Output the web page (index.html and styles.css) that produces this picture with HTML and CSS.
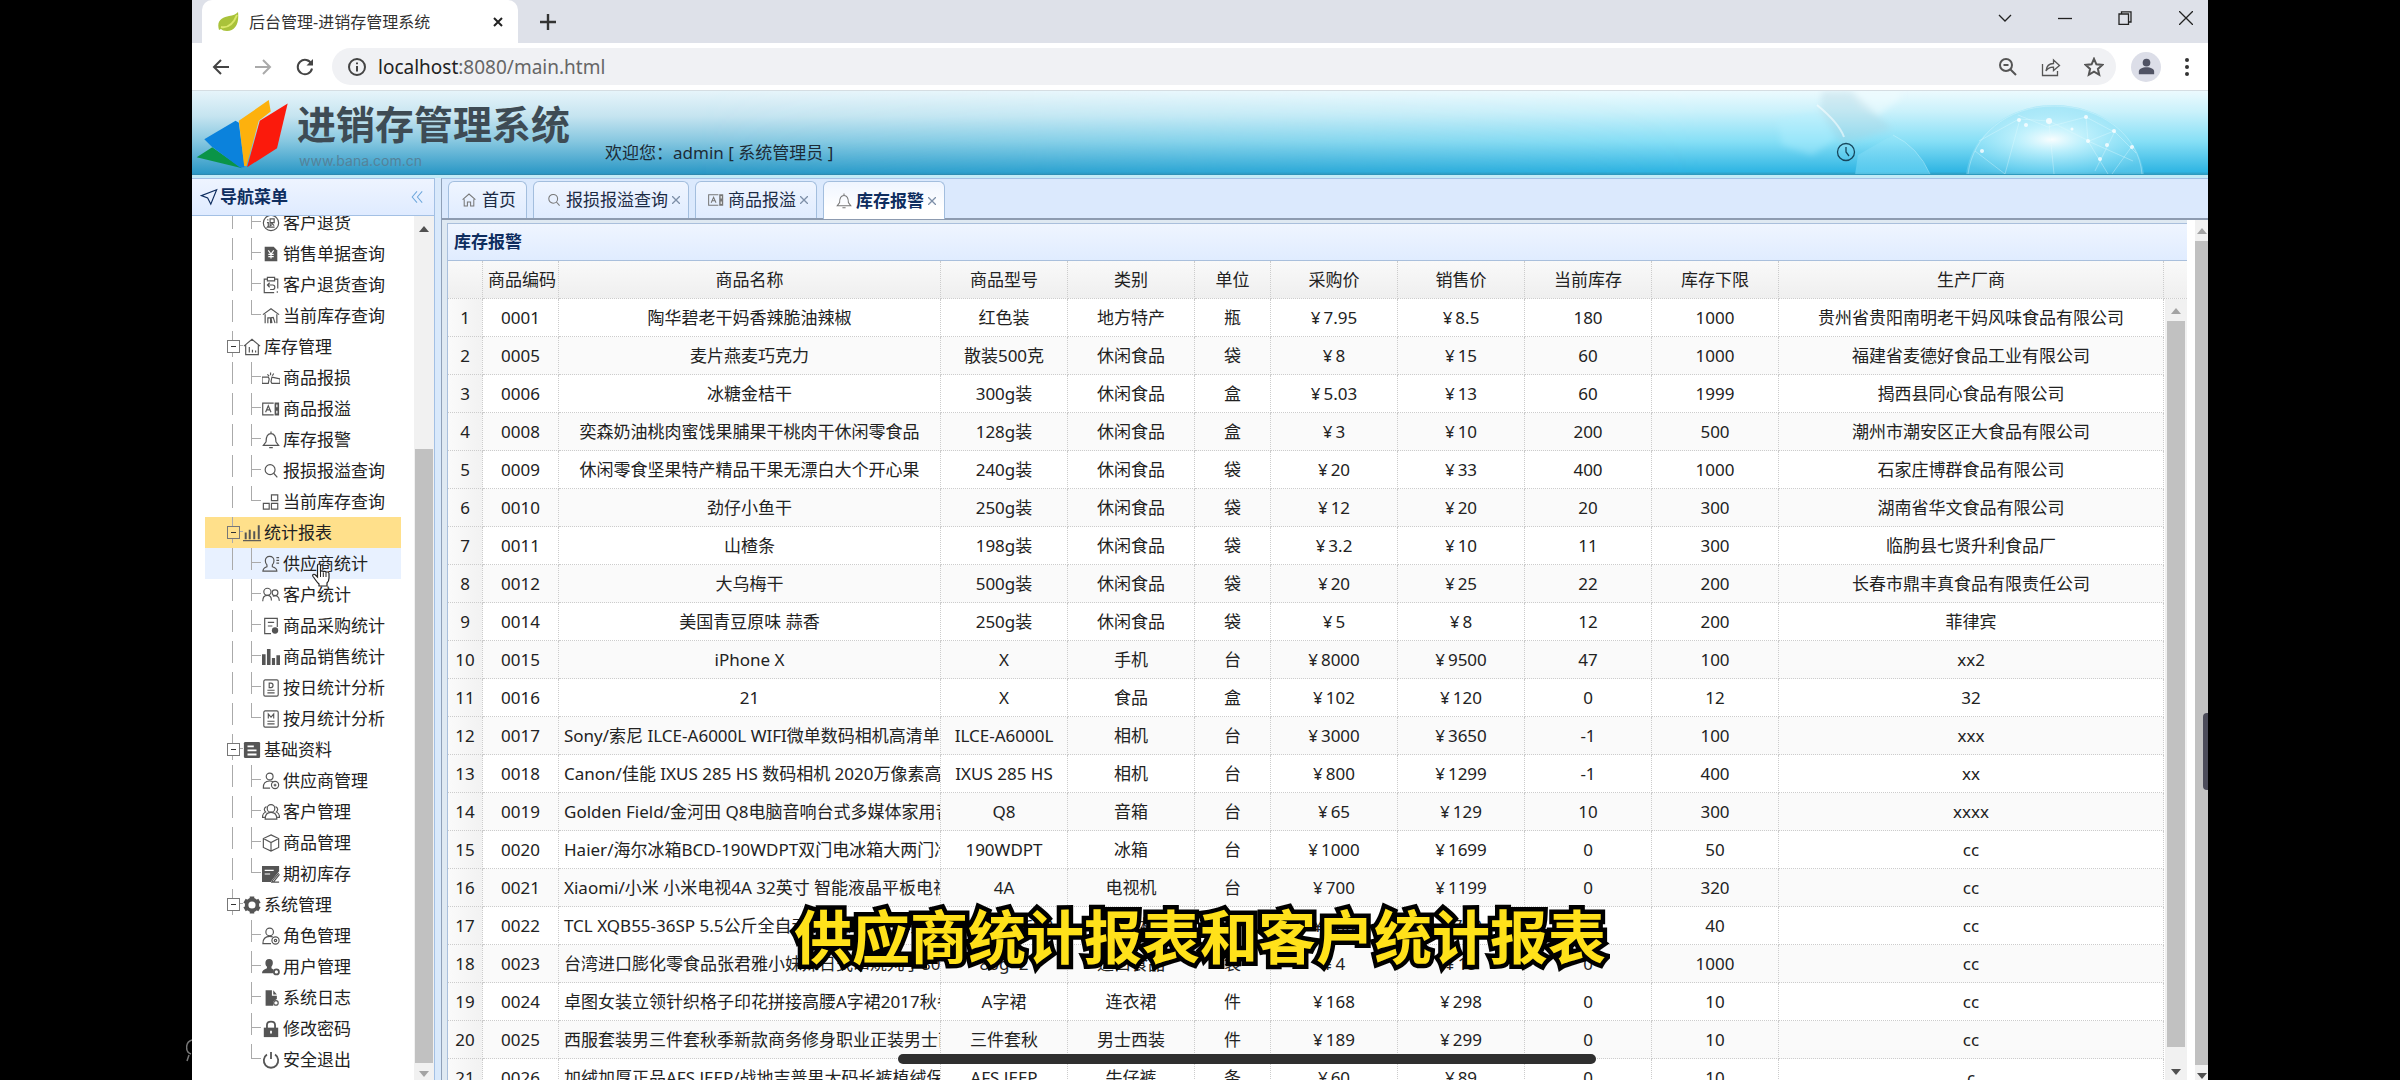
FILE: index.html
```html
<!DOCTYPE html>
<html lang="zh-CN">
<head>
<meta charset="utf-8">
<title>后台管理-进销存管理系统</title>
<link rel="stylesheet" href="styles.css">
</head>
<body>
<svg class="sprite" aria-hidden="true">
  <symbol id="i-back" viewBox="0 0 20 20"><path d="M18 10H3M10 3l-7 7 7 7"/></symbol>
  <symbol id="i-fwd" viewBox="0 0 20 20"><path d="M2 10h15M10 3l7 7-7 7"/></symbol>
  <symbol id="i-reload" viewBox="0 0 20 20"><path d="M16.500 7A7.200 7.200 0 1 0 17 11.500"/><path d="M18 2v6.500h-6.500z" fill="currentColor" stroke="none"/></symbol>
  <symbol id="i-info" viewBox="0 0 20 20"><circle cx="10" cy="10" r="8"/><path d="M10 9v5.500M10 5.500v1.800"/></symbol>
  <symbol id="i-zoomout" viewBox="0 0 20 20"><circle cx="8" cy="8" r="6"/><path d="M12.500 12.500 18 18M5.500 8h5"/></symbol>
  <symbol id="i-share" viewBox="0 0 20 20"><path d="M1.500 7v11.500h15V14"/><path d="M5 14c.5-5 3-7.500 7.500-7.500V3l6 5.500-6 5v-3.300C9 10 7 11 5 14z"/></symbol>
  <symbol id="i-star" viewBox="0 0 20 20"><path d="m10 1.800 2.400 5.500 6 .6-4.500 4 1.300 5.900L10 14.700l-5.200 3.100 1.300-5.900-4.500-4 6-.6z"/></symbol>
  <symbol id="i-clock" viewBox="0 0 20 20"><circle cx="10" cy="10" r="8.500"/><path d="M10 5v5l3 4"/></symbol>
  <symbol id="i-plane" viewBox="0 0 20 20"><path d="M18.500 2 1.500 8.500l7 2.500 3.500 7z"/></symbol>
  <symbol id="i-collapse" viewBox="0 0 20 20"><path d="M10 3 4 10l6 7M16.500 3l-6 7 6 7"/></symbol>
  <symbol id="i-return" viewBox="0 0 20 20"><circle cx="10" cy="10" r="8.500"/><path d="M6 6l1 1M5.500 9.500H7v4l-1 1h8M9 5.500h4.500v4H9zM9 5.500V13l2-1M10.500 10l3 3"/></symbol>
  <symbol id="i-bill" viewBox="0 0 20 20"><path class="f" d="M3 2h10l4 4v12H3z"/><path class="w" d="M7 6l3 4 3-4M10 10v5M7 10.500h6M7 13h6"/></symbol>
  <symbol id="i-clip" viewBox="0 0 20 20"><path d="M6 3.500H2.500v15h11M17.500 14V3.500H14M6 1.500h8v4H6zM17 17v1.500"/><path d="M6 10h6c3 0 3 5 0 5H9M8.500 7.500 6 10l2.500 2.500"/></symbol>
  <symbol id="i-store" viewBox="0 0 20 20"><path d="M1 8.500 10 2l9 6.500M3.500 8v10M16.500 8v10M6.500 18v-6h3v6M11 18l-1-6 2.500-.5L14.500 18"/></symbol>
  <symbol id="i-house" viewBox="0 0 20 20"><path d="M1 9 10 1.500 19 9M3 8v10.500h14V8M7 16v-6M10.500 16v-3M14 16v-2"/></symbol>
  <symbol id="i-broken" viewBox="0 0 20 20"><path d="M0 9h7l1 2-1 5H0zM11 9l9 2v5h-9l-1-2zM6 6l2 2M9.500 4v3M13 5l-1.500 2.500"/></symbol>
  <symbol id="i-abox" viewBox="0 0 20 20"><path d="M13 16.500H.8v-13H13M4 13.500l3-7 3 7M5 11h4"/><path class="f" d="M14 2.800h5v14.400h-5z"/><path class="w" d="M16.500 5v3M16.500 12v3"/></symbol>
  <symbol id="i-bell" viewBox="0 0 20 20"><path d="M10 .5v2M1.500 16l3-4c0-6 2-9 5.500-9s5.500 3 5.500 9l3 4zM8 18.500h4"/></symbol>
  <symbol id="i-search" viewBox="0 0 20 20"><circle cx="9" cy="8.500" r="5.500"/><path d="m13 12.500 4 4.500"/></symbol>
  <symbol id="i-blocks" viewBox="0 0 20 20"><path d="M10.500 2h7v6.500h-7zM10.500 11.500h7V18h-7zM1.500 11.500H8V18H1.500z"/></symbol>
  <symbol id="i-bars" viewBox="0 0 20 20"><path d="M0 18.500h20"/><path d="M3 17V9.500M7.500 17V6.500M12.500 17V8M17.500 17V1.500" stroke-width="2.200"/></symbol>
  <symbol id="i-person" viewBox="0 0 20 20"><path d="M8.500 1.500c3 0 4.800 2 4.800 4.800 0 2.300-.8 3.700-1.800 4.700v2c3 .8 5 2 5 5H1c0-3 2-4.200 4.500-5v-2c-1-1-1.800-2.400-1.800-4.700 0-2.800 1.800-4.800 4.800-4.800zM16 3h3M16 6h3M16 9h3"/></symbol>
  <symbol id="i-people" viewBox="0 0 20 20"><circle cx="6" cy="6.500" r="4"/><path d="M.8 17c0-4 2-6.500 5.200-6.500S10.500 13 10.500 16"/><circle cx="14.500" cy="7.500" r="3.200"/><path d="M12 11.500c4-2 7 0 7.300 5"/></symbol>
  <symbol id="i-report" viewBox="0 0 20 20"><path d="M10 18.500H3v-17h14V11M6.500 6h7M6.500 10h5"/><circle class="f" cx="14.500" cy="15" r="3.500"/></symbol>
  <symbol id="i-chart" viewBox="0 0 20 20"><path class="f" d="M0 7h4v12H0zM5.500 1h4v18h-4zM11 11h3.500v8H11zM16 8h4v11h-4z"/></symbol>
  <symbol id="i-day" viewBox="0 0 20 20"><rect x="2" y="1" width="16" height="18" rx="1.500"/><path d="M8 4.500h2c3 0 3 5 0 5H8zM6 12.500h8M6 15.500h8"/></symbol>
  <symbol id="i-month" viewBox="0 0 20 20"><rect x="2" y="1" width="16" height="18" rx="1.500"/><path d="M7 9.500v-5l3 3.500 3-3.500v5M6 12.500h8M6 15.500h8"/></symbol>
  <symbol id="i-data" viewBox="0 0 20 20"><rect class="f" x="1" y="1" width="18" height="18" rx="1.500"/><path class="w" d="M5 6h7M5 10.500h10M5 15h10" stroke-width="2"/></symbol>
  <symbol id="i-supplier" viewBox="0 0 20 20"><circle cx="8.500" cy="5" r="3.800"/><path d="M9 18H1.500c-.5-5 2-8 7-8 1.800 0 3 .3 4 1"/><circle cx="14.500" cy="14.500" r="4"/><path d="M13 14.500h3M14.500 13v3"/></symbol>
  <symbol id="i-group" viewBox="0 0 20 20"><circle cx="10" cy="6" r="4.200"/><path d="M3.500 18c0-5 2.500-7.500 6.500-7.500s6.500 2.500 6.500 7.500zM5 4C2 5 2 8.500 4 10c-2.500 1-3.500 3-3.500 6H3M15 4c3 1 3 4.500 1 6 2.500 1 3.500 3 3.500 6H17"/></symbol>
  <symbol id="i-cube" viewBox="0 0 20 20"><path d="m10 1 8.500 4v10L10 19l-8.500-4V5zM1.500 5l8.500 4.500L18.500 5M10 9.500V19"/></symbol>
  <symbol id="i-edit" viewBox="0 0 20 20"><path class="f" d="M0 1h19v6l-8 10-1 2H0z"/><path class="w" d="M3 6h10M3 10h6"/><path d="m18.500 9-7 8.500-.5 1.500 2-.5 6.500-8M11 19h8"/></symbol>
  <symbol id="i-gear" viewBox="0 0 20 20"><path d="M10 .5v4M10 15.500v4M1.700 5.200l3.500 2M14.800 12.800l3.500 2M1.700 14.800l3.500-2M14.800 7.200l3.500-2" stroke-width="5"/><circle cx="10" cy="10" r="6" stroke-width="4"/></symbol>
  <symbol id="i-role" viewBox="0 0 20 20"><circle cx="8.500" cy="5.500" r="4.200"/><path d="M10 18.500H1c0-5 2.500-8 7.500-8 1.500 0 2.500.2 3.500.7"/><circle cx="15" cy="15" r="4"/><circle cx="15" cy="15" r="1.300"/></symbol>
  <symbol id="i-user" viewBox="0 0 20 20"><path class="f" d="M8 1c3 0 4.500 2 4 5-.3 2-1 3-1.500 3.500v2L13 13l-1 4H0c0-3 2-4 5.500-5.500v-2C4.500 9 4 8 3.800 6 3.500 3 5 1 8 1z"/><circle cx="16" cy="15.500" r="2.800" stroke-width="2"/></symbol>
  <symbol id="i-log" viewBox="0 0 20 20"><path class="f" d="M4 1.500h7v6h5.500V11l-4 3v4.500H4zM12.500 1.500l4 4.500h-4z"/><circle cx="15.500" cy="15.500" r="2.500"/></symbol>
  <symbol id="i-lock" viewBox="0 0 20 20"><path d="M5.500 9V5.500c0-5 9-5 9 0V9" stroke-width="2"/><path class="f" d="M2 8.500h16V19H2z"/><path class="w" d="M10 12v3" stroke-width="2"/></symbol>
  <symbol id="i-power" viewBox="0 0 20 20"><path d="M5.500 4a8 8 0 1 0 9 0M10 1v8" stroke-width="2"/></symbol>
  <symbol id="i-home" viewBox="0 0 20 20"><path d="M2 9.500 10 2.500l8 7M4 9v8.500h4v-5h4v5h4V9"/></symbol>
</svg>

<div class="browser">
  <header class="titlebar">
    <div class="page-tab">
      <svg class="leaf" viewBox="0 0 22 22"><path d="M2 19C-1 9 6 6 12 5c4-.6 7-1.500 9-4 1.500 12-3 19-11 19-3 0-5-1-6-2z" fill="#a9c23a"/><path d="M4 16c6 1 12-2 16-12" fill="none" stroke="#dbe86b" stroke-width="2"/></svg>
      <span class="page-title">后台管理-进销存管理系统</span>
      <button class="plain" aria-label="关闭标签页"><svg class="ic s10" viewBox="0 0 20 20"><path d="m2 2 16 16M18 2 2 18" stroke-width="4"/></svg></button>
    </div>
    <button class="plain new-tab" aria-label="新建标签页"><svg class="ic s16" viewBox="0 0 20 20"><path d="M10 0v20M0 10h20" stroke-width="3"/></svg></button>
    <div class="win-buttons">
      <button class="plain" aria-label="搜索标签页"><svg class="ic s14" viewBox="0 0 14 14"><path d="m1 4 6 6 6-6"/></svg></button>
      <button class="plain" aria-label="最小化"><svg class="ic s14" viewBox="0 0 14 14"><path d="M0 7.500h14"/></svg></button>
      <button class="plain" aria-label="还原"><svg class="ic s14" viewBox="0 0 14 14"><path d="M1 3h9.500v10.500H1zM3.500 3V.8H13V11h-2.500"/></svg></button>
      <button class="plain" aria-label="关闭"><svg class="ic s14" viewBox="0 0 14 14"><path d="m0 0 14 14M14 0 0 14"/></svg></button>
    </div>
  </header>

  <div class="toolbar">
    <div class="nav-buttons">
      <button class="plain" aria-label="后退"><svg class="ic s20 bold"><use href="#i-back"/></svg></button>
      <button class="plain dim" aria-label="前进"><svg class="ic s20 bold"><use href="#i-fwd"/></svg></button>
      <button class="plain" aria-label="刷新"><svg class="ic s20 bold"><use href="#i-reload"/></svg></button>
    </div>
    <div class="address">
      <svg class="ic s20 bold"><use href="#i-info"/></svg>
      <label for="url">localhost</label><input id="url" type="text" value=":8080/main.html">
      <div class="address-tools">
        <button class="plain" aria-label="缩放"><svg class="ic s20 bold"><use href="#i-zoomout"/></svg></button>
        <button class="plain" aria-label="分享"><svg class="ic s20"><use href="#i-share"/></svg></button>
        <button class="plain" aria-label="收藏"><svg class="ic s20 bold"><use href="#i-star"/></svg></button>
      </div>
    </div>
    <button class="avatar" aria-label="用户"><svg viewBox="0 0 20 20"><circle cx="10" cy="5.500" r="4.500"/><path d="M1 19v-3c0-3 4-5 9-5s9 2 9 5v3z"/></svg></button>
    <button class="plain menu" aria-label="菜单"><svg viewBox="0 0 4 20"><circle cx="2" cy="3" r="2"/><circle cx="2" cy="10" r="2"/><circle cx="2" cy="17" r="2"/></svg></button>
  </div>

  <div class="banner">
    <svg class="scenery" viewBox="0 0 508 83" aria-hidden="true">
      <defs>
        <radialGradient id="glow" cx="48%" cy="50%" r="60%"><stop offset="0" stop-color="#fff" stop-opacity=".95"/><stop offset=".3" stop-color="#cdf5fe" stop-opacity=".8"/><stop offset=".75" stop-color="#8fe0f6" stop-opacity=".6"/><stop offset="1" stop-color="#7fd6f0" stop-opacity=".4"/></radialGradient>
        <linearGradient id="haze" x1="0" y1="0" x2="0" y2="1"><stop offset="0" stop-color="#b5eefd" stop-opacity=".1"/><stop offset="1" stop-color="#7fe0fb" stop-opacity=".5"/></linearGradient>
        <filter id="soft" x="-20%" y="-20%" width="140%" height="140%"><feGaussianBlur stdDeviation="3"/></filter>
      </defs>
      <g filter="url(#soft)">
        <path d="M78 28l40-8 18 28-24 16-30-10z" fill="#b5f1ff" opacity=".4"/>
        <path d="M150 0h50v8l-22 16-18-8z" fill="#f4fdff" opacity=".5"/>
        <path d="M120 20l22 34 50-16-40-38h-30z" fill="#a9cdda" opacity=".3"/>
      </g>
      <path d="M158 64l35-20q25 12 37 40h-75z" fill="url(#haze)"/>
      <path d="M117 14q22 18 27 32" fill="none" stroke="#fff" stroke-width="2" opacity=".55"/>
      <path d="M193 44q25 12 37 39" fill="none" stroke="#d5f7ff" opacity=".4"/>
      <path d="M266 83c5-38 40-69 88-69s85 31 90 69z" fill="url(#glow)"/>
      <g fill="none" stroke="#e9fcff" stroke-width="1" opacity=".35">
        <path d="M268 83c5-38 38-68 86-68s85 30 88 68M279 50l40-22 30 2 40 20 25-10 22 22M318 24l30 12 38-10 30 16M275 60l30 23M320 28l-15 55M349 32l5 51M388 50l20 33M415 40l-20 40M386 26l2 24 45 20M412 83l20-28"/>
      </g>
      <g fill="#fff" opacity=".8"><circle cx="319" cy="29" r="2"/><circle cx="349" cy="30" r="3"/><circle cx="326" cy="34" r="2"/><circle cx="388" cy="50" r="2"/><circle cx="414" cy="40" r="2"/><circle cx="386" cy="26" r="2"/><circle cx="282" cy="60" r="2"/><circle cx="432" cy="56" r="2"/><circle cx="400" cy="68" r="2"/><circle cx="372" cy="38" r="1.500"/><circle cx="407" cy="54" r="2"/></g>
    </svg>
    <svg class="logo" viewBox="18 54 280 216" aria-hidden="true">
      <path d="M20 232 67 202l90 63z" fill="#0a9447"/>
      <path d="m43 178 94-56 10 6 17 134-14 1-85-63z" fill="#0b82dc"/>
      <path d="m147 122 90-62 6 34-36 28-37 136h-7z" fill="#fdb10d"/>
      <path d="m210 122 84-52-32 135-90 57z" fill="#fb1a0c"/>
    </svg>
    <div class="brand">
      <h1>进销存管理系统</h1>
      <span>www.bana.com.cn</span>
    </div>
    <p class="welcome">欢迎您：admin [ 系统管理员 ]</p>
    <svg class="ic s20 clock"><use href="#i-clock"/></svg>
  </div>

  <div class="workspace">
    <aside class="sidebar">
      <div class="side-head">
        <svg class="ic s18"><use href="#i-plane"/></svg><h2>导航菜单</h2>
        <button class="plain" aria-label="折叠"><svg class="ic s16"><use href="#i-collapse"/></svg></button>
      </div>
      <div class="side-body">
        <ul class="tree">
          <li class="leaf-row"><svg class="ic s18"><use href="#i-return"/></svg><a href="#">客户退货</a></li>
          <li class="leaf-row"><svg class="ic s18"><use href="#i-bill"/></svg><a href="#">销售单据查询</a></li>
          <li class="leaf-row"><svg class="ic s18"><use href="#i-clip"/></svg><a href="#">客户退货查询</a></li>
          <li class="leaf-row end"><svg class="ic s18"><use href="#i-store"/></svg><a href="#">当前库存查询</a></li>
          <li class="group-row"><svg class="ic s18"><use href="#i-house"/></svg><a href="#">库存管理</a></li>
          <li class="leaf-row"><svg class="ic s18"><use href="#i-broken"/></svg><a href="#">商品报损</a></li>
          <li class="leaf-row"><svg class="ic s18"><use href="#i-abox"/></svg><a href="#">商品报溢</a></li>
          <li class="leaf-row"><svg class="ic s18"><use href="#i-bell"/></svg><a href="#">库存报警</a></li>
          <li class="leaf-row"><svg class="ic s18"><use href="#i-search"/></svg><a href="#">报损报溢查询</a></li>
          <li class="leaf-row end"><svg class="ic s18"><use href="#i-blocks"/></svg><a href="#">当前库存查询</a></li>
          <li class="group-row selected"><svg class="ic s18"><use href="#i-bars"/></svg><a href="#">统计报表</a></li>
          <li class="leaf-row hover"><svg class="ic s18"><use href="#i-person"/></svg><a href="#">供应商统计</a>
            <svg class="pointer" viewBox="0 0 20 24" aria-hidden="true"><path d="M6.500 14V2.500c0-2 3-2 3 0V9c0-1.500 2.800-1.500 2.800.3 0-1.300 2.700-1.200 2.700.5 0-1.300 3-1 3 .7V15c0 2-1 4-2 5v3H8v-2c-2-1.500-4-5-6-7.500-1.200-2 1-3 2.500-1.500z" fill="#fff" stroke="#222" stroke-width="1.200"/><path d="M9.500 9v5M12.300 9.500V14M15 10v4" stroke="#222" fill="none"/></svg></li>
          <li class="leaf-row"><svg class="ic s18"><use href="#i-people"/></svg><a href="#">客户统计</a></li>
          <li class="leaf-row"><svg class="ic s18"><use href="#i-report"/></svg><a href="#">商品采购统计</a></li>
          <li class="leaf-row"><svg class="ic s18"><use href="#i-chart"/></svg><a href="#">商品销售统计</a></li>
          <li class="leaf-row"><svg class="ic s18"><use href="#i-day"/></svg><a href="#">按日统计分析</a></li>
          <li class="leaf-row end"><svg class="ic s18"><use href="#i-month"/></svg><a href="#">按月统计分析</a></li>
          <li class="group-row"><svg class="ic s18"><use href="#i-data"/></svg><a href="#">基础资料</a></li>
          <li class="leaf-row"><svg class="ic s18"><use href="#i-supplier"/></svg><a href="#">供应商管理</a></li>
          <li class="leaf-row"><svg class="ic s18"><use href="#i-group"/></svg><a href="#">客户管理</a></li>
          <li class="leaf-row"><svg class="ic s18"><use href="#i-cube"/></svg><a href="#">商品管理</a></li>
          <li class="leaf-row end"><svg class="ic s18"><use href="#i-edit"/></svg><a href="#">期初库存</a></li>
          <li class="group-row last"><svg class="ic s18"><use href="#i-gear"/></svg><a href="#">系统管理</a></li>
          <li class="leaf-row tail"><svg class="ic s18"><use href="#i-role"/></svg><a href="#">角色管理</a></li>
          <li class="leaf-row tail"><svg class="ic s18"><use href="#i-user"/></svg><a href="#">用户管理</a></li>
          <li class="leaf-row tail"><svg class="ic s18"><use href="#i-log"/></svg><a href="#">系统日志</a></li>
          <li class="leaf-row tail"><svg class="ic s18"><use href="#i-lock"/></svg><a href="#">修改密码</a></li>
          <li class="leaf-row tail end"><svg class="ic s18"><use href="#i-power"/></svg><a href="#">安全退出</a></li>
        </ul>
        <div class="scroll side-scroll"><i class="up dark"></i><b></b><i class="down"></i></div>
      </div>
    </aside>

    <main class="main">
      <nav class="tabs">
        <button class="tab"><svg class="ic s16"><use href="#i-home"/></svg>首页</button>
        <button class="tab closable"><svg class="ic s16"><use href="#i-search"/></svg>报损报溢查询<svg class="ic x" viewBox="0 0 8 8"><path d="m0 0 8 8M8 0 0 8"/></svg></button>
        <button class="tab closable"><svg class="ic s16"><use href="#i-abox"/></svg>商品报溢<svg class="ic x" viewBox="0 0 8 8"><path d="m0 0 8 8M8 0 0 8"/></svg></button>
        <button class="tab closable active"><svg class="ic s16"><use href="#i-bell"/></svg>库存报警<svg class="ic x" viewBox="0 0 8 8"><path d="m0 0 8 8M8 0 0 8"/></svg></button>
      </nav>
      <div class="frame">
        <section class="panel">
          <h2>库存报警</h2>
          <div class="grid">
            <table>
              <colgroup><col class="c-no"><col class="c-s"><col class="c-name"><col class="c-m"><col class="c-m"><col class="c-s"><col class="c-m"><col class="c-m"><col class="c-m"><col class="c-m"><col><col class="c-bar"></colgroup>
              <thead><tr><th></th><th>商品编码</th><th>商品名称</th><th>商品型号</th><th>类别</th><th>单位</th><th>采购价</th><th>销售价</th><th>当前库存</th><th>库存下限</th><th>生产厂商</th><th></th></tr></thead>
              <tbody>
                <tr><td>1</td><td>0001</td><td>陶华碧老干妈香辣脆油辣椒</td><td>红色装</td><td>地方特产</td><td>瓶</td><td>¥7.95</td><td>¥8.5</td><td>180</td><td>1000</td><td>贵州省贵阳南明老干妈风味食品有限公司</td><td rowspan="21" class="bar-cell"></td></tr>
                <tr><td>2</td><td>0005</td><td>麦片燕麦巧克力</td><td>散装500克</td><td>休闲食品</td><td>袋</td><td>¥8</td><td>¥15</td><td>60</td><td>1000</td><td>福建省麦德好食品工业有限公司</td></tr>
                <tr><td>3</td><td>0006</td><td>冰糖金桔干</td><td>300g装</td><td>休闲食品</td><td>盒</td><td>¥5.03</td><td>¥13</td><td>60</td><td>1999</td><td>揭西县同心食品有限公司</td></tr>
                <tr><td>4</td><td>0008</td><td>奕森奶油桃肉蜜饯果脯果干桃肉干休闲零食品</td><td>128g装</td><td>休闲食品</td><td>盒</td><td>¥3</td><td>¥10</td><td>200</td><td>500</td><td>潮州市潮安区正大食品有限公司</td></tr>
                <tr><td>5</td><td>0009</td><td>休闲零食坚果特产精品干果无漂白大个开心果</td><td>240g装</td><td>休闲食品</td><td>袋</td><td>¥20</td><td>¥33</td><td>400</td><td>1000</td><td>石家庄博群食品有限公司</td></tr>
                <tr><td>6</td><td>0010</td><td>劲仔小鱼干</td><td>250g装</td><td>休闲食品</td><td>袋</td><td>¥12</td><td>¥20</td><td>20</td><td>300</td><td>湖南省华文食品有限公司</td></tr>
                <tr><td>7</td><td>0011</td><td>山楂条</td><td>198g装</td><td>休闲食品</td><td>袋</td><td>¥3.2</td><td>¥10</td><td>11</td><td>300</td><td>临朐县七贤升利食品厂</td></tr>
                <tr><td>8</td><td>0012</td><td>大乌梅干</td><td>500g装</td><td>休闲食品</td><td>袋</td><td>¥20</td><td>¥25</td><td>22</td><td>200</td><td>长春市鼎丰真食品有限责任公司</td></tr>
                <tr><td>9</td><td>0014</td><td>美国青豆原味 蒜香</td><td>250g装</td><td>休闲食品</td><td>袋</td><td>¥5</td><td>¥8</td><td>12</td><td>200</td><td>菲律宾</td></tr>
                <tr><td>10</td><td>0015</td><td>iPhone X</td><td>X</td><td>手机</td><td>台</td><td>¥8000</td><td>¥9500</td><td>47</td><td>100</td><td>xx2</td></tr>
                <tr><td>11</td><td>0016</td><td>21</td><td>X</td><td>食品</td><td>盒</td><td>¥102</td><td>¥120</td><td>0</td><td>12</td><td>32</td></tr>
                <tr><td>12</td><td>0017</td><td>Sony/索尼 ILCE-A6000L WIFI微单数码相机高清单电</td><td>ILCE-A6000L</td><td>相机</td><td>台</td><td>¥3000</td><td>¥3650</td><td>-1</td><td>100</td><td>xxx</td></tr>
                <tr><td>13</td><td>0018</td><td>Canon/佳能 IXUS 285 HS 数码相机 2020万像素高清</td><td>IXUS 285 HS</td><td>相机</td><td>台</td><td>¥800</td><td>¥1299</td><td>-1</td><td>400</td><td>xx</td></tr>
                <tr><td>14</td><td>0019</td><td>Golden Field/金河田 Q8电脑音响台式多媒体家用音箱</td><td>Q8</td><td>音箱</td><td>台</td><td>¥65</td><td>¥129</td><td>10</td><td>300</td><td>xxxx</td></tr>
                <tr><td>15</td><td>0020</td><td>Haier/海尔冰箱BCD-190WDPT双门电冰箱大两门冷藏</td><td>190WDPT</td><td>冰箱</td><td>台</td><td>¥1000</td><td>¥1699</td><td>0</td><td>50</td><td>cc</td></tr>
                <tr><td>16</td><td>0021</td><td>Xiaomi/小米 小米电视4A 32英寸 智能液晶平板电视机</td><td>4A</td><td>电视机</td><td>台</td><td>¥700</td><td>¥1199</td><td>0</td><td>320</td><td>cc</td></tr>
                <tr><td>17</td><td>0022</td><td>TCL XQB55-36SP 5.5公斤全自动洗衣机波轮小型家用</td><td>XQB55-36SP</td><td>洗衣机</td><td>台</td><td>¥400</td><td>¥729</td><td>0</td><td>40</td><td>cc</td></tr>
                <tr><td>18</td><td>0023</td><td>台湾进口膨化零食品张君雅小妹妹日式串烧丸子80g</td><td>80g*2</td><td>进口食品</td><td>袋</td><td>¥4</td><td>¥15</td><td>0</td><td>1000</td><td>cc</td></tr>
                <tr><td>19</td><td>0024</td><td>卓图女装立领针织格子印花拼接高腰A字裙2017秋冬</td><td>A字裙</td><td>连衣裙</td><td>件</td><td>¥168</td><td>¥298</td><td>0</td><td>10</td><td>cc</td></tr>
                <tr><td>20</td><td>0025</td><td>西服套装男三件套秋季新款商务修身职业正装男士西装</td><td>三件套秋</td><td>男士西装</td><td>件</td><td>¥189</td><td>¥299</td><td>0</td><td>10</td><td>cc</td></tr>
                <tr><td>21</td><td>0026</td><td>加绒加厚正品AFS JEEP/战地吉普男大码长裤植绒保暖</td><td>AFS JEEP</td><td>牛仔裤</td><td>条</td><td>¥60</td><td>¥89</td><td>0</td><td>10</td><td>c</td></tr>
              </tbody>
            </table>
            <div class="scroll grid-scroll"><i class="up"></i><b></b><i class="down dark"></i></div>
          </div>
        </section>
        <div class="scroll frame-scroll"><i class="up"></i><b></b><i class="down dark"></i></div>
      </div>
    </main>
  </div>
  <div class="edge-handle"></div>
</div>

<svg class="ghost" viewBox="0 0 6 24" aria-hidden="true"><path d="M6 1C-1 3-1 13 5 15M3 16l-2 6" fill="none" stroke="#777" stroke-width="1.500"/></svg>
<p class="caption">供应商统计报表和客户统计报表</p>
<div class="home-bar"></div>
</body>
</html>
```
FILE: styles.css
```css
* { box-sizing: border-box; }
html, body { height: 100%; }
body {
  margin: 0;
  padding: 0 8%;
  background: #000;
  color: #222;
  font: 17px/24px "Noto Sans", "Noto Sans CJK SC", sans-serif;
  overflow: hidden;
}
h1, h2, p, ul { margin: 0; padding: 0; }
a { color: inherit; text-decoration: none; }
button, input { font: inherit; color: inherit; }
.sprite { position: absolute; width: 0; height: 0; }

.ic { fill: none; stroke: currentColor; stroke-width: 1.3; flex: none; display: block; }
.ic.bold { stroke-width: 2; }
.f { fill: currentColor; stroke: none; }
.w { stroke: #fff; }
.s10 { width: 10px; height: 10px; }
.s14 { width: 14px; height: 14px; }
.s16 { width: 16px; height: 16px; }
.s18 { width: 18px; height: 18px; }
.s20 { width: 20px; height: 20px; }
.plain {
  display: flex; align-items: center; justify-content: center;
  padding: 0; border: 0; background: none;
}

.browser {
  position: relative;
  display: flex; flex-direction: column;
  height: 100%;
  background: #fff;
  overflow: hidden;
}

/* browser window */
.titlebar {
  display: flex; align-items: center;
  height: 43px; flex: none;
  padding-left: 10px;
  background: #dee1e9;
}
.page-tab {
  display: flex; align-items: center; gap: 10px;
  width: 316px; height: 43px;
  padding: 0 15px;
  border-radius: 10px 10px 0 0;
  background: #fff;
}
.leaf { width: 22px; height: 22px; }
.page-title { flex: 1; font-size: 16px; color: #333; }
.new-tab { margin-left: 22px; width: 16px; color: #333; }
.win-buttons { display: flex; margin-left: auto; padding-bottom: 8px; color: #222; }
.win-buttons .plain { width: 60px; }
.win-buttons .plain:last-child { width: 53px; padding-left: 9px; }

.toolbar {
  display: flex; align-items: center;
  height: 48px; flex: none;
  border-bottom: 1px solid #d5dde2;
  color: #444;
}
.nav-buttons { display: flex; gap: 22px; padding-left: 19px; }
.dim { color: #aaa; }
.address {
  display: flex; align-items: center;
  flex: 1; height: 37px;
  margin-left: 17px; padding: 0 12px 0 15px;
  border-radius: 19px;
  background: #f0f1f4;
}
.address label { margin-left: 11px; font-size: 19px; color: #222; }
.address input {
  flex: 1; min-width: 0; height: 30px;
  padding: 0; border: 0; background: none;
  font-size: 19px; color: #666;
}
.address-tools { display: flex; gap: 23px; color: #555; }
.avatar {
  display: flex; align-items: center; justify-content: center;
  width: 30px; height: 30px;
  margin-left: 15px; padding: 0;
  border: 0; border-radius: 50%;
  background: #dcdee8;
}
.avatar svg { width: 17px; height: 17px; fill: #505364; }
.menu { width: 4px; margin: 0 19px 0 24px; }
.menu svg { width: 4px; height: 20px; fill: #333; }

/* page banner */
.banner {
  position: relative;
  display: flex;
  height: 87px; flex: none;
  padding-left: 4px;
  border-bottom: 3px solid #c3ebf7;
  background: linear-gradient(#e6f4fa, #c5e4f0 30%, #86c7e0 60%, #2b98c6 98%, #2d83a6);
}
.banner::before {
  content: "";
  position: absolute; inset: 0;
  background: linear-gradient(#ecfafe, #c9f1fb 25%, #86dff6 60%, #2fb5e3 96%, #2d96b8);
  -webkit-mask-image: linear-gradient(90deg, transparent 25%, #000 75%);
  mask-image: linear-gradient(90deg, transparent 25%, #000 75%);
}
.scenery { position: absolute; right: 0; top: 0; width: 508px; height: 83px; }
.logo { position: relative; width: 93px; height: 72px; margin-top: 7px; }
.brand { position: relative; margin-left: 8px; color: #3e4b54; }
.brand h1 { margin-top: 11px; font-size: 39px; line-height: 44px; font-weight: 700; }
.brand span { display: block; margin-top: 3px; padding-left: 2px; font: 14px/24px Inter, sans-serif; color: #55839a; }
.welcome { position: relative; margin: 50px 0 0 35px; color: #1c2b36; }
.clock { position: absolute; left: 82%; top: 51px; color: #16465c; margin-left: -9px; }

/* workspace */
.workspace { display: flex; flex: 1; min-height: 0; background: #d9e9fb; }
.sidebar {
  display: flex; flex-direction: column;
  width: 243px; flex: none;
  border: 1px solid #a3c0e4; border-bottom: 0; border-left: 0;
  background: #fff;
}
.side-head {
  display: flex; align-items: center;
  height: 37px; flex: none;
  padding: 0 9px 0 8px;
  border-bottom: 1px solid #a3c0e4;
  background: linear-gradient(#eef4ff, #dfebff);
  color: #0e2d5f;
}
.side-head h2 { flex: 1; margin-left: 2px; font-size: 17px; line-height: 24px; }
.side-head .plain { color: #6fa8dc; }
.side-body { display: flex; flex: 1; min-height: 0; overflow: hidden; }
.tree { flex: 1; margin: -9px 13px 0; list-style: none; }
.tree li { position: relative; display: flex; align-items: center; height: 31px; color: #222; }
.tree .ic { color: #555; }
.tree a { margin-left: 3px; white-space: nowrap; }
.leaf-row { padding-left: 57px; }
.group-row { padding-left: 38px; }
/* tree guide lines */
.leaf-row { background: linear-gradient(#aaa, #aaa) 27px 0 / 1px 22px no-repeat, linear-gradient(#aaa, #aaa) 46px 0 / 1px 22px no-repeat, linear-gradient(#aaa, #aaa) 46px 14px / 10px 1px no-repeat; }
.leaf-row.end { background-size: 1px 22px, 1px 14px, 10px 1px; }
.leaf-row.tail { background-size: 0 0, 1px 22px, 10px 1px; }
.leaf-row.tail.end { background-size: 0 0, 1px 14px, 10px 1px; }
.leaf-row.hover { background-color: #e8f1ff; }
.group-row { background: linear-gradient(#aaa, #aaa) 27px 0 / 1px 26px no-repeat, linear-gradient(#aaa, #aaa) 27px 14px / 11px 1px no-repeat; }
.group-row::before {
  content: "";
  position: absolute; left: 22px; top: 9px;
  width: 11px; height: 11px;
  border: 1px solid #777;
  background: linear-gradient(#333, #333) center / 5px 1px no-repeat, #fff;
}
.group-row.selected { background-color: #ffe08b; }
.group-row.selected::before { background-color: #ffe08b; }
.pointer { position: absolute; left: 106px; top: 15px; width: 20px; height: 24px; z-index: 1; }

.scroll {
  display: flex; flex-direction: column; align-items: center;
  flex: none;
  background: #f1f1f1;
}
.scroll i { flex: none; width: 0; height: 0; border: 5px solid transparent; color: #a3a3a3; }
.scroll .dark { color: #505050; }
.scroll .up { border-bottom: 6px solid; border-top: 0; }
.scroll .down { border-top: 6px solid; border-bottom: 0; }
.scroll b { flex: 1; width: 18px; background: #c1c1c1; }
.side-scroll { width: 20px; padding: 10px 0 3px; }
.side-scroll b { margin: 217px 0 8px; }

.main { display: flex; flex-direction: column; flex: 1; min-width: 0; margin-left: 6px; border-left: 1px solid #8fa0b8; border-top: 1px solid #a3c0e4; }
.tabs {
  display: flex; align-items: flex-end; gap: 6px;
  height: 41px; flex: none;
  padding-left: 6px;
  border-bottom: 2px solid #8d9bb0;
  background: #dbe9fd;
}
.tab {
  display: flex; align-items: center; gap: 5px;
  height: 37px;
  padding: 0 10px 0 12px;
  border: 1px solid #a3bede; border-bottom: 0;
  border-radius: 6px 6px 0 0;
  background: linear-gradient(#eff5ff, #e0ecff);
  color: #1d2c45;
}
.tab .ic { color: #777; }
.tab .x { width: 8px; height: 8px; color: #7d8fa8; }
.tab.closable { gap: 4px; padding-right: 8px; }
.tab.active { height: 38px; margin-bottom: -1px; background: linear-gradient(#eff5ff, #fff 70%); font-weight: 700; color: #0e2d5f; }

.frame { display: flex; flex: 1; min-height: 0; overflow: hidden; background: #fff; }
.panel {
  display: flex; flex-direction: column;
  flex: 1; min-width: 0;
  padding: 3px 0 0 5px;
  background: #dfe9f2;
}
.panel h2 {
  height: 38px; flex: none;
  padding: 0 6px;
  border: 1px solid #a9bfdc; border-right: 0;
  background: linear-gradient(#eff5ff, #e0ecff);
  font-size: 17px; line-height: 36px; color: #0e2d5f;
}
.grid { position: relative; flex: 1; min-height: 0; overflow: hidden; background: #fff; border-left: 1px solid #a9bfdc; }
table { width: 100%; table-layout: fixed; border-collapse: separate; border-spacing: 0; }
.c-no { width: 35px; }
.c-s { width: 76px; }
.c-m { width: 127px; }
.c-name { width: 382px; }
.c-bar { width: 23px; }
th, td {
  height: 38px; padding: 0 5px;
  border-right: 1px dotted #ccc; border-bottom: 1px dotted #ccc;
  text-align: center; font-weight: 400; line-height: 24px;
  white-space: nowrap; overflow: hidden;
}
th { background: linear-gradient(#f9f9f9, #efefef); }
th:last-child, .bar-cell { border-right: 0; }
tbody tr:nth-child(even) { background: #fafafa; }
td:first-child { background: linear-gradient(90deg, #fafafa, #f2f2f2); }
td:nth-child(7)::first-letter, td:nth-child(8)::first-letter { margin-right: 3px; }
.grid-scroll { position: absolute; right: 0; top: 38px; bottom: 0; width: 22px; padding: 9px 0 5px; }
.grid-scroll b { margin: 7px 0 22px; }
.frame-scroll { width: 13px; margin-left: 8px; padding: 8px 0 1px; overflow: hidden; }
.frame-scroll b { margin: 7px 0 8px; }

.edge-handle {
  position: absolute; right: 0; top: 66%;
  width: 5px; height: 77px;
  border-radius: 4px 0 0 4px;
  background: #4c4c5a;
}

/* video overlay */
.ghost { position: fixed; left: 186px; bottom: 17px; width: 6px; height: 24px; }
.caption {
  position: fixed; left: 0; right: 0; bottom: 111px;
  text-align: center;
  font: 700 58px/70px "Noto Sans CJK SC", sans-serif;
  color: #ffe11a;
  -webkit-text-stroke: 9px #000;
  paint-order: stroke fill;
}
.home-bar {
  position: fixed; left: 0; right: 0; bottom: 16px;
  width: 698px; height: 10px;
  margin: 0 auto;
  border-radius: 5px;
  background: #2f2f2f;
  transform: translateX(47px);
}
```
